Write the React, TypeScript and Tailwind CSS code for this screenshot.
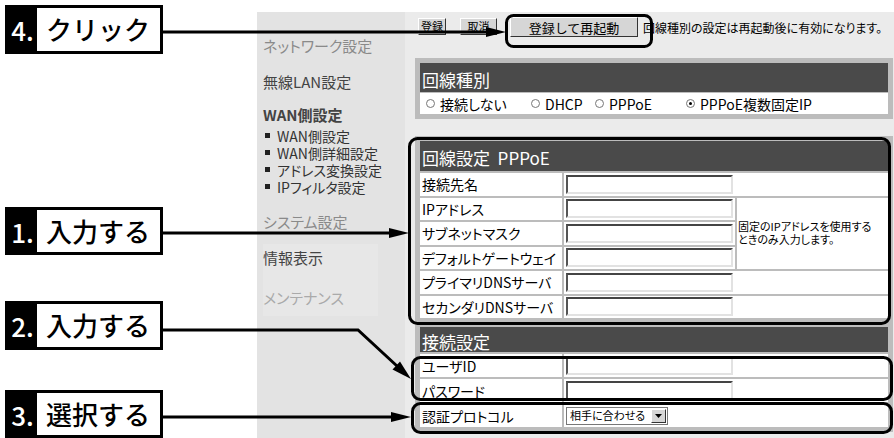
import React from 'react'

const palt = "[font-feature-settings:'palt']"

function Callout({ num, text, className = '' }: { num: string; text: string; className?: string }) {
  return (
    <div className={`flex h-[50px] w-[158px] border-[3px] border-black bg-white ${className}`}>
      <div className="flex w-[29px] items-center justify-center bg-black pt-[2px] text-[26px] font-medium leading-none text-white">
        {num}.
      </div>
      <div className="flex flex-1 items-center pl-[9px] text-[26px] font-medium leading-none text-black">
        {text}
      </div>
    </div>
  )
}

function Radio({ checked = false }: { checked?: boolean }) {
  return (
    <span className="flex h-[9px] w-[9px] shrink-0 items-center justify-center rounded-full border border-[#777] bg-white">
      {checked && <span className="h-[3px] w-[3px] rounded-full bg-black" />}
    </span>
  )
}

function TextInput() {
  return (
    <div className="h-[19px] w-[167px] border-2 border-t-[#444] border-l-[#555] border-r-[#e2e2e2] border-b-[#e2e2e2] bg-white" />
  )
}

function Label({ children }: { children: React.ReactNode }) {
  return (
    <div className={`flex items-center whitespace-nowrap bg-white pl-[2px] text-[14px] leading-none text-black ${palt}`}>
      {children}
    </div>
  )
}

function InputCell({ wide = false }: { wide?: boolean }) {
  return (
    <div className={`flex items-center bg-white pl-[2px] ${wide ? 'col-span-2' : ''}`}>
      <TextInput />
    </div>
  )
}

function Header({ children, h }: { children: React.ReactNode; h: string }) {
  return (
    <div className={`flex items-center bg-[#4a4a4a] pl-[2px] pt-[3px] text-[17px] leading-none text-white ${h}`}>
      {children}
    </div>
  )
}

const pppoeRows = ['接続先名', 'IPアドレス', 'サブネットマスク', 'デフォルトゲートウェイ', 'プライマリDNSサーバ', 'セカンダリDNSサーバ']

export default function App() {
  return (
    <div className="relative flex h-[438px] w-[894px] overflow-hidden bg-white font-['Noto_Sans_CJK_JP',sans-serif]">
      {/* 手順ラベル */}
      <div className="flex w-[257px] shrink-0 flex-col pl-[5px]">
        <Callout num="4" text="クリック" className="mt-[5px]" />
        <Callout num="1" text="入力する" className="mt-[153px]" />
        <Callout num="2" text="入力する" className="mt-[46px]" />
        <Callout num="3" text="選択する" className="mt-[40px]" />
      </div>

      {/* サイドメニュー */}
      <div className={`mt-[12px] flex w-[148px] shrink-0 flex-col bg-[#e3e3e3] pl-[6px] ${palt}`}>
        <div className="mt-[24px] h-[20px] text-[15px] leading-[20px] text-[#8a8a8a]">ネットワーク設定</div>
        <div className="mt-[16px] h-[20px] text-[15px] leading-[20px] text-[#444]">無線LAN設定</div>
        <div className="mt-[14px] h-[18px] text-[15px] font-bold leading-[18px] text-[#444]">WAN側設定</div>
        <div className="mt-[3px] flex flex-col text-[14px] leading-none text-[#333]">
          {['WAN側設定', 'WAN側詳細設定', 'アドレス変換設定', 'IPフィルタ設定'].map((item) => (
            <div key={item} className="flex h-[17px] items-center gap-[7px] pl-[2px]">
              <span className="h-[5px] w-[5px] shrink-0 bg-[#222]" />
              <span className="whitespace-nowrap">{item}</span>
            </div>
          ))}
        </div>
        <div className="mt-[17px] h-[20px] text-[15px] leading-[20px] text-[#8a8a8a]">システム設定</div>
        <div className="mt-[12px] flex w-[115px] flex-col bg-[#e7e7e7] pt-[4px] pb-[8px]">
          <div className="h-[20px] text-[15px] leading-[20px] text-[#444]">情報表示</div>
          <div className="mt-[20px] h-[20px] text-[15px] leading-[20px] text-[#aaa]">メンテナンス</div>
        </div>
      </div>

      {/* 設定画面 */}
      <div className="mt-[12px] flex flex-1 flex-col bg-[#ebebeb]">
        <div className="flex items-start pt-[5px] pl-[13px]">
          <button className="mt-[1px] flex h-[17px] w-[28px] items-center justify-center border border-t-white border-l-white border-r-[#333] border-b-[#333] bg-[#d6d6d6] text-[11px] leading-none">
            登録
          </button>
          <button className="ml-[14px] mt-[1px] flex h-[17px] w-[37px] items-center justify-center border border-t-white border-l-white border-r-[#333] border-b-[#333] bg-[#d6d6d6] text-[11px] leading-none">
            取消
          </button>
          <button className="ml-[13px] flex h-[20px] w-[128px] items-center justify-center border border-t-white border-l-white border-r-[#333] border-b-[#333] bg-[#d6d6d6] text-[13px] leading-none">
            登録して再起動
          </button>
          <span className={`ml-[5px] mt-[3px] whitespace-nowrap text-[12px] leading-[16px] text-black ${palt}`}>
            回線種別の設定は再起動後に有効になります。
          </span>
        </div>

        {/* 回線種別 */}
        <div className="mt-[21px] ml-[10px] flex w-[478px] flex-col gap-[1px] bg-[#bcbcbc] p-[5px]">
          <Header h="h-[29px]">回線種別</Header>
          <div className={`flex h-[21px] items-center whitespace-nowrap bg-white text-[14px] leading-none ${palt}`}>
            <span className="flex w-[111px] items-center gap-[5px] pl-[6px]">
              <Radio />
              接続しない
            </span>
            <span className="flex w-[64px] items-center gap-[5px]">
              <Radio />
              DHCP
            </span>
            <span className="flex w-[91px] items-center gap-[5px]">
              <Radio />
              PPPoE
            </span>
            <span className="flex items-center gap-[5px]">
              <Radio checked />
              PPPoE複数固定IP
            </span>
          </div>
        </div>

        {/* 回線設定・接続設定 */}
        <div className="mt-[17px] ml-[10px] flex w-[478px] flex-col bg-[#bcbcbc] p-[5px]">
          <Header h="h-[30px]">回線設定&nbsp;&nbsp;PPPoE</Header>
          <div className="mt-[2px] grid grid-cols-[142px_171px_151px] grid-rows-[repeat(6,22.5px)] gap-[2px]">
            {pppoeRows.map((label, i) => (
              <React.Fragment key={label}>
                <Label>{label}</Label>
                <InputCell wide={i === 0 || i > 3} />
                {i === 1 && (
                  <div className={`row-span-3 flex items-center whitespace-nowrap bg-white pl-[1px] text-[11px] leading-[13px] text-black ${palt}`}>
                    固定のIPアドレスを使用する
                    <br />
                    ときのみ入力します。
                  </div>
                )}
              </React.Fragment>
            ))}
          </div>
          <div className="mt-[9px]">
            <Header h="h-[25px]">接続設定</Header>
          </div>
          <div className="mt-[2px] grid grid-cols-[142px_324px] grid-rows-[repeat(3,23px)] gap-[2px]">
            <Label>ユーザID</Label>
            <InputCell />
            <Label>パスワード</Label>
            <InputCell />
            <Label>認証プロトコル</Label>
            <div className="flex items-center bg-white pl-[2px]">
              <div className="flex h-[18px] w-[102px] items-center border border-[#777] bg-white">
                <span className={`flex-1 whitespace-nowrap pl-[3px] text-[11px] leading-none ${palt}`}>相手に合わせる</span>
                <span className="mr-[1px] flex h-[14px] w-[15px] shrink-0 items-center justify-center border border-t-white border-l-white border-r-[#333] border-b-[#333] bg-[#d6d6d6]">
                  <svg width="7" height="4" viewBox="0 0 7 4">
                    <path d="M0 0h7L3.5 4z" fill="#000" />
                  </svg>
                </span>
              </div>
            </div>
          </div>
        </div>
      </div>

      {/* 矢印と囲み */}
      <svg className="pointer-events-none absolute inset-0" width="894" height="438" viewBox="0 0 894 438">
        <g fill="none" stroke="#000" strokeWidth="3">
          <rect x="506.5" y="15.5" width="145" height="31" rx="7" />
          <rect x="409.5" y="138.5" width="480" height="185" rx="8" />
          <rect x="412.5" y="357.5" width="479" height="42" rx="8" />
          <rect x="412.5" y="403.5" width="479" height="29" rx="8" />
          <path d="M163 32H488" />
          <path d="M163 233H391" />
          <path d="M163 330H358L397 366" />
          <path d="M163 417H393" />
        </g>
        <g fill="#000">
          <polygon points="486,27 506,32 486,37" />
          <polygon points="389,228 409,233 389,238" />
          <polygon points="392.5,369.5 411,379 400,361.5" />
          <polygon points="391,412 411,417 391,422" />
        </g>
      </svg>
    </div>
  )
}
